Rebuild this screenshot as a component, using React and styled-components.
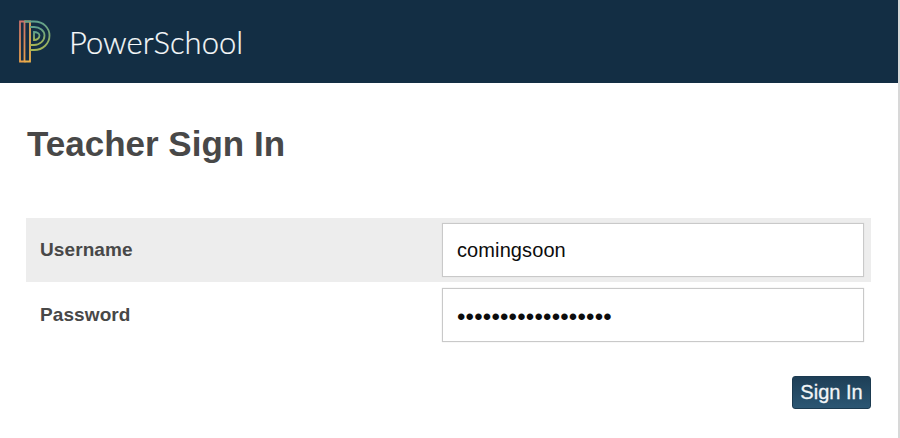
import React from 'react'
import styled, { createGlobalStyle } from 'styled-components'

const Global = createGlobalStyle`
  html, body { margin: 0; padding: 0; background: #fff; }
  body { font-family: "Liberation Sans", Arial, sans-serif; }
`

const Page = styled.div`
  width: 900px;
  height: 438px;
  box-sizing: border-box;
  border-right: 2px solid #d8d8d8;
  overflow: hidden;
  background: #fff;
`

const Header = styled.header`
  height: 83px;
  background: #132e44;
  display: flex;
  align-items: center;
  padding-left: 18px;
  gap: 18px;
`

const Brand = styled.span`
  font-family: "Lato", "Open Sans", sans-serif;
  font-weight: 300;
  font-size: 31px;
  color: #f6f9fa;
  -webkit-text-stroke: 0.2px #f6f9fa;
`

const Main = styled.main`
  padding: 40px 27px 0 26px;
`

const Title = styled.h1`
  margin: 0 0 54px 1px;
  font-size: 35px;
  line-height: 41px;
  font-weight: 700;
  color: #484848;
`

const Row = styled.div`
  display: flex;
  align-items: center;
  justify-content: space-between;
  height: ${props => props.tall ? 65 : 64}px;
  padding-right: 7px;
  background: ${props => props.shaded ? '#ededed' : 'transparent'};
`

const Label = styled.label`
  padding-left: 14px;
  font-size: 19px;
  font-weight: 700;
  letter-spacing: 0.1px;
  color: #484848;
`

const Field = styled.input`
  width: 422px;
  height: 54px;
  box-sizing: border-box;
  padding: ${props => props.type === 'password' ? '5px' : '0'} 14px 0;
  border: 1px solid #c9c9c9;
  box-shadow: 0 0 1px #d4d4d4;
  border-radius: 0;
  outline: none;
  background: #fff;
  font-family: "Liberation Sans", Arial, sans-serif;
  font-size: ${props => props.type === 'password' ? '24px' : '20px'};
  letter-spacing: ${props => props.type === 'password' ? '0.2px' : '0.1px'};
  color: #0c0c0c;
`

const Actions = styled.div`
  display: flex;
  justify-content: flex-end;
  margin-top: 29px;
`

const Button = styled.button`
  width: 79px;
  height: 33px;
  padding: 0;
  border: 1px solid #1b3a50;
  border-radius: 3px;
  background: linear-gradient(#1e3f57, #2b5673);
  color: #f2f5f7;
  font-family: "Liberation Sans", Arial, sans-serif;
  font-size: 20px;
  -webkit-text-stroke: 0.3px #f2f5f7;
`

const Logo = () => (
  <svg width="33" height="43" viewBox="0 0 33 43" fill="none" strokeWidth="1.8">
    <defs>
      <linearGradient id="bar" x1="0" y1="0" x2="0" y2="1">
        <stop offset="0" stopColor="#c9706a" />
        <stop offset="1" stopColor="#e8a04c" />
      </linearGradient>
      <linearGradient id="stem" x1="0" y1="0" x2="0" y2="1">
        <stop offset="0" stopColor="#e3a358" />
        <stop offset="1" stopColor="#eab04a" />
      </linearGradient>
      <linearGradient id="bowl" x1="0" y1="0" x2="0" y2="1">
        <stop offset="0" stopColor="#5fa08c" />
        <stop offset="1" stopColor="#a5b556" />
      </linearGradient>
    </defs>
    <path d="M2 1.500H6.500V41.500H2Z" stroke="url(#bar)" />
    <path d="M6.500 1.500H12V41.500H6.500" stroke="url(#stem)" />
    <path d="M6.500 1.500H16C26 1.500 31.500 8.500 31.500 15.500C31.500 23.500 25 30 16 30H12" stroke="url(#bowl)" />
    <path d="M12 7H16C22 7 26.500 11 26.500 15.500C26.500 20.500 22 25 16 25H12" stroke="url(#bowl)" />
    <path d="M16 12C19 12 21.500 13.500 21.500 15.500C21.500 18 19 20 16 20V12Z" stroke="url(#bowl)" />
  </svg>
)

export default function App() {
  return (
    <Page>
      <Global />
      <Header>
        <Logo />
        <Brand>PowerSchool</Brand>
      </Header>
      <Main>
        <Title>Teacher Sign In</Title>
        <Row shaded>
          <Label htmlFor="username">Username</Label>
          <Field id="username" type="text" defaultValue="comingsoon" />
        </Row>
        <Row tall>
          <Label htmlFor="password">Password</Label>
          <Field id="password" type="password" defaultValue="comingsoon-comings" />
        </Row>
        <Actions>
          <Button>Sign In</Button>
        </Actions>
      </Main>
    </Page>
  )
}
